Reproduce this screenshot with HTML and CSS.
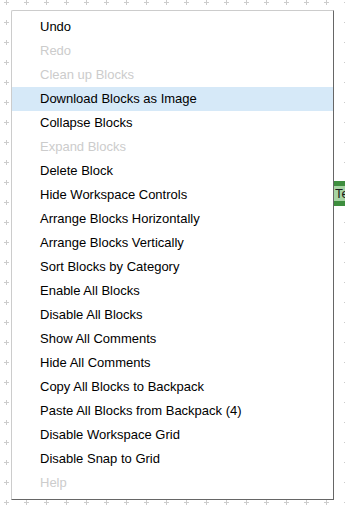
FILE: index.html
```html
<!DOCTYPE html>
<html lang="en">
<head>
  <meta charset="UTF-8">
  <meta name="viewport" content="width=device-width, initial-scale=1.0">
  <title>Workspace Menu</title>
  <link rel="stylesheet" href="styles.css">
</head>
<body>

  <div class="workspace">
    <svg class="grid" width="100%" height="100%">
      <defs>
        <pattern id="gridPattern" width="20" height="20" patternUnits="userSpaceOnUse">
          <line x1="4" y1="2.5" x2="9" y2="2.5" stroke="#cccccc" stroke-width="1"/>
          <line x1="6.5" y1="0" x2="6.5" y2="5" stroke="#cccccc" stroke-width="1"/>
        </pattern>
      </defs>
      <rect width="100%" height="100%" fill="url(#gridPattern)"/>
    </svg>

    <!-- block sitting on the canvas, mostly hidden behind the menu -->
    <div class="block">
      <div class="block-field">Text</div>
    </div>

    <div class="menu">
      <div class="menu-item">Undo</div>
      <div class="menu-item disabled">Redo</div>
      <div class="menu-item disabled">Clean up Blocks</div>
      <div class="menu-item active">Download Blocks as Image</div>
      <div class="menu-item">Collapse Blocks</div>
      <div class="menu-item disabled">Expand Blocks</div>
      <div class="menu-item">Delete Block</div>
      <div class="menu-item">Hide Workspace Controls</div>
      <div class="menu-item">Arrange Blocks Horizontally</div>
      <div class="menu-item">Arrange Blocks Vertically</div>
      <div class="menu-item">Sort Blocks by Category</div>
      <div class="menu-item">Enable All Blocks</div>
      <div class="menu-item">Disable All Blocks</div>
      <div class="menu-item">Show All Comments</div>
      <div class="menu-item">Hide All Comments</div>
      <div class="menu-item">Copy All Blocks to Backpack</div>
      <div class="menu-item">Paste All Blocks from Backpack (4)</div>
      <div class="menu-item">Disable Workspace Grid</div>
      <div class="menu-item">Disable Snap to Grid</div>
      <div class="menu-item disabled">Help</div>
    </div>
  </div>

</body>
</html>
```

FILE: styles.css
```css
* {
  margin: 0;
  padding: 0;
  box-sizing: border-box;
}

body {
  font-family: "Liberation Sans", Arial, sans-serif;
  background-color: #ffffff;
  width: 345px;
  height: 511px;
  overflow: hidden;
}

.workspace {
  position: relative;
  width: 345px;
  height: 511px;
  overflow: hidden;
}

.grid {
  position: absolute;
  top: 0;
  left: 0;
}

.block {
  position: absolute;
  left: 320px;
  top: 181px;
  width: 60px;
  height: 25px;
  background-color: #3e8e3e;
  padding: 5px 0 5px 13px;
}

.block-field {
  height: 15px;
  background-color: #a8d4a4;
  color: #1a1a1a;
  font-size: 13px;
  line-height: 15px;
  padding-left: 2px;
}

.menu {
  position: absolute;
  left: 11px;
  top: 10px;
  width: 323px;
  height: 490px;
  background-color: #ffffff;
  border: 1px solid;
  border-color: #cccccc #666666 #666666 #cccccc;
  border-radius: 2px 0 0 0;
  padding: 4px 0;
}

.menu-item {
  height: 24px;
  line-height: 24px;
  padding-left: 28px;
  font-size: 13px;
  color: #000000;
  white-space: nowrap;
}

.menu-item.disabled {
  color: #cccccc;
}

.menu-item.active {
  background-color: #d6e9f8;
}
```
